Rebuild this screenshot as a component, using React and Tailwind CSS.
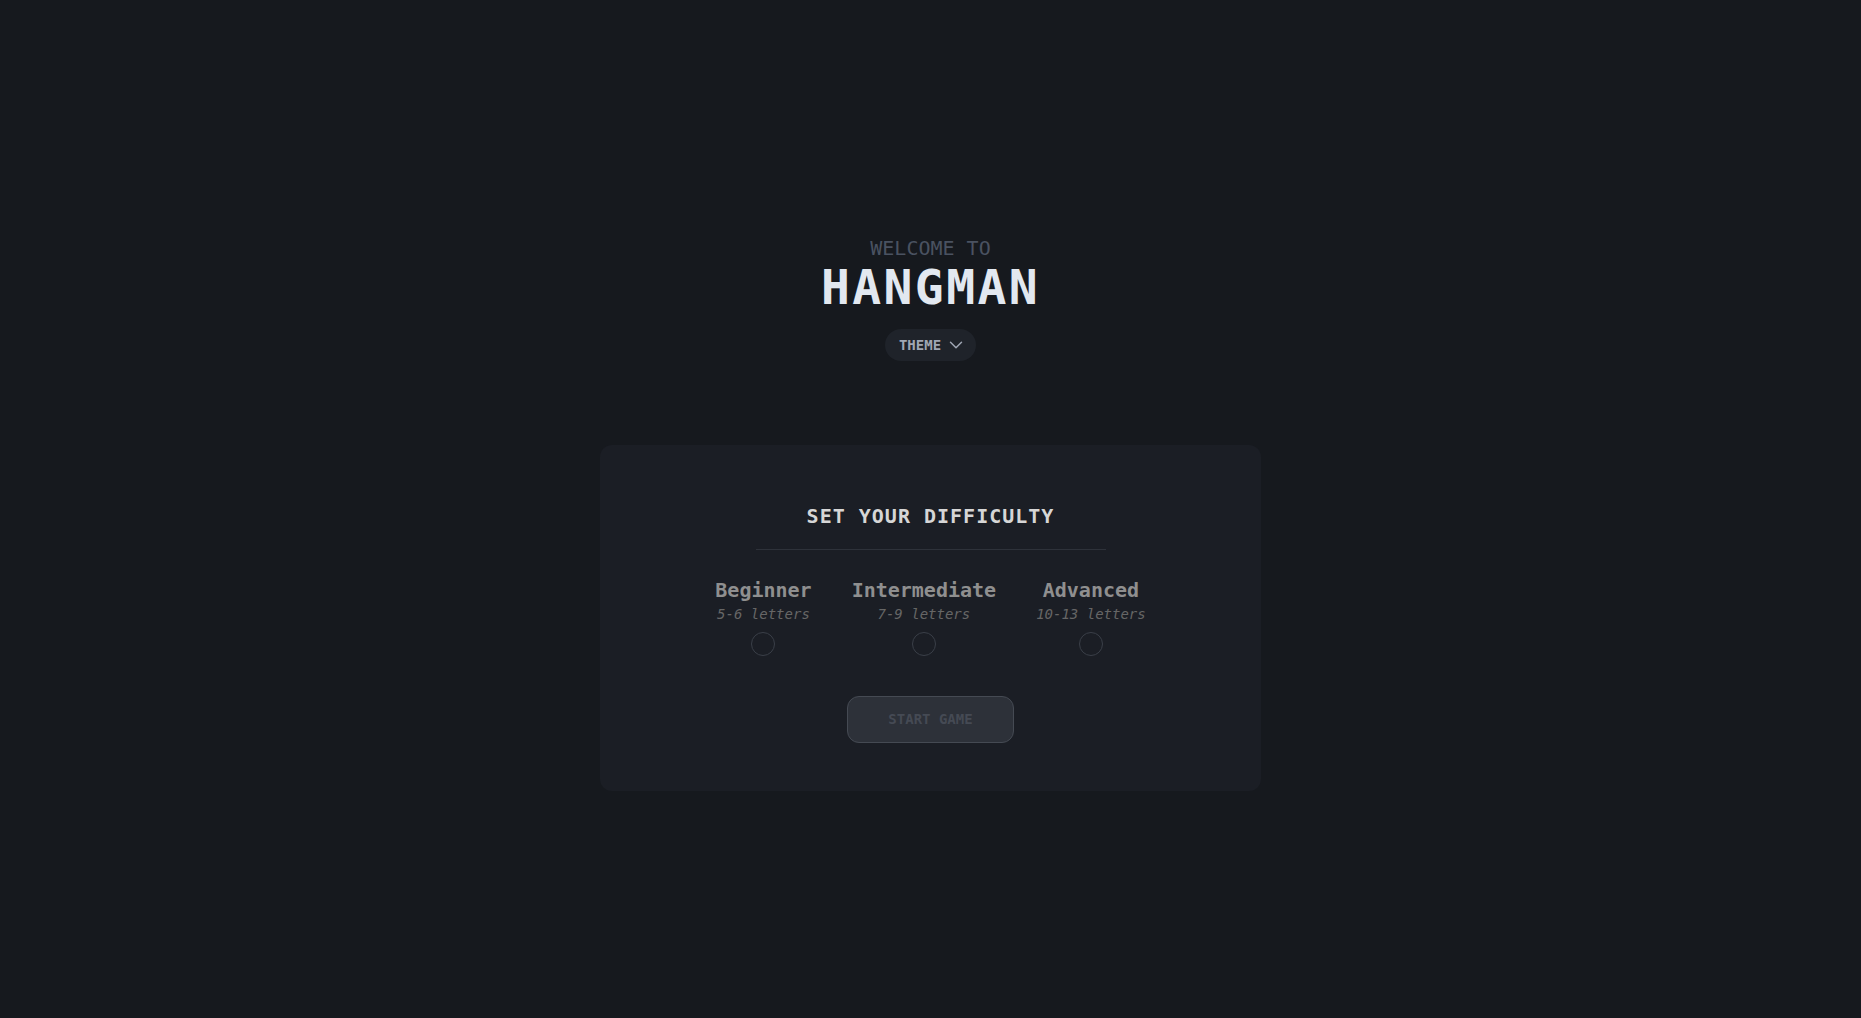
import React, { useState } from 'react';
import { ChevronDown } from 'lucide-react';

const levels = [
  { id: 'beginner', name: 'Beginner', range: '5-6 letters' },
  { id: 'intermediate', name: 'Intermediate', range: '7-9 letters' },
  { id: 'advanced', name: 'Advanced', range: '10-13 letters' },
];

const App = () => {
  const [level, setLevel] = useState(null);

  return (
    <div
      className="min-h-screen bg-[#16191e] flex flex-col items-center justify-center pt-[6px]"
      style={{ fontFamily: '"DejaVu Sans Mono", "Liberation Mono", monospace' }}
    >
      {/* Header */}
      <div className="flex flex-col items-center">
        <p className="text-xl leading-7 text-[#4a5261]">WELCOME TO</p>
        <h1 className="text-5xl leading-none font-bold tracking-wider text-[#e2e8f0] mt-[1px]">HANGMAN</h1>
        <button className="mt-[18px] h-8 pl-[14px] pr-[9px] rounded-full bg-[#1f232a] text-[#a0a7b4] text-sm font-bold flex items-center gap-1">
          THEME
          <ChevronDown size={22} strokeWidth={1.6} />
        </button>
      </div>

      {/* Difficulty card */}
      <div className="mt-[84px] w-[661px] rounded-xl bg-[#1b1e25] pt-[57px] pb-12 flex flex-col items-center">
        <h2 className="text-xl leading-7 font-bold tracking-wider text-[#d6d6d6]">SET YOUR DIFFICULTY</h2>
        <div className="mt-[19px] w-[350px] h-px bg-[#2e323a]" />

        <div className="mt-[26px] flex gap-10">
          {levels.map((l) => (
            <label key={l.id} className="flex flex-col items-center cursor-pointer">
              <span className="text-xl leading-7 font-bold text-[#8f8f8f]">{l.name}</span>
              <span className="text-sm leading-5 italic text-[#666666]">{l.range}</span>
              <input
                type="radio"
                name="level"
                checked={level === l.id}
                onChange={() => setLevel(l.id)}
                className="mt-2 w-6 h-6 appearance-none rounded-full border border-[#3a3f48] cursor-pointer"
              />
            </label>
          ))}
        </div>

        <button
          disabled={!level}
          className="mt-10 h-[47px] px-10 rounded-xl bg-[#2d3139] border border-[#454a53] text-sm font-bold text-[#454a54]"
        >
          START GAME
        </button>
      </div>
    </div>
  );
};

export default App;
